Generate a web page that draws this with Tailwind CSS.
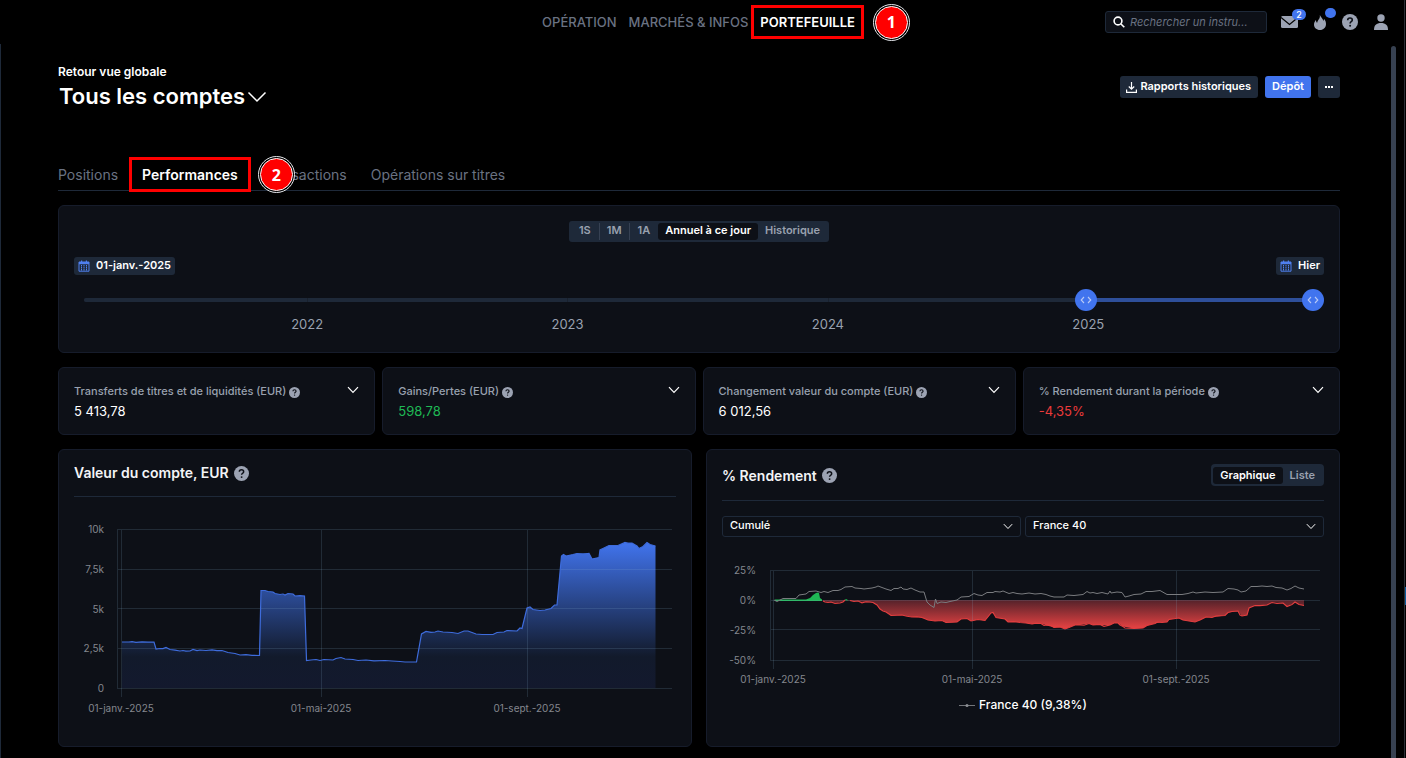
<!DOCTYPE html>
<html lang="fr">
<head>
    <meta charset="UTF-8">
    <meta name="viewport" content="width=device-width, initial-scale=1.0">
    <title>Portefeuille - Performances</title>
    <script src="https://cdn.jsdelivr.net/npm/@tailwindcss/browser@4"></script>
</head>
<body class="min-h-screen bg-black font-['Inter',sans-serif] text-white overflow-x-hidden">
    <!-- Shared icons -->
    <svg class="hidden">
        <symbol id="chevron" viewBox="0 0 12 8">
            <path d="M1 1.2 6 6.4 11 1.2" fill="none" stroke="currentColor" stroke-width="1.2"/>
        </symbol>
        <symbol id="help" viewBox="0 0 16 16">
            <circle cx="8" cy="8" r="8" fill="#9ca3b3"/>
            <path d="M5.7 6.2C5.7 4.8 6.7 4 8 4s2.3.8 2.3 2c0 1.7-2.2 1.7-2.2 3.4" fill="none" stroke="#0d1017" stroke-width="1.6"/>
            <circle cx="8.1" cy="11.8" r="1" fill="#0d1017"/>
        </symbol>
        <symbol id="calendar" viewBox="0 0 12 12">
            <path d="M1 2h10v9.2H1z" fill="none" stroke="#4f80f0" stroke-width="1"/>
            <path d="M1 2h10v2.2H1zM3 .4h1.2V2H3zM7.8.4H9V2H7.8z" fill="#4f80f0"/>
            <path d="M3.5 5v5.5M6 5v5.5M8.5 5v5.5" stroke="#4f80f0" stroke-width="1" stroke-dasharray="1.5 .5"/>
        </symbol>
    </svg>

    <!-- Header -->
    <header class="flex h-11 items-center">
        <div class="flex-1"></div>
        <nav class="relative flex items-center text-[13px] font-medium text-gray-500">
            <a href="#" class="mr-[12px] pt-px">OPÉRATION</a>
            <a href="#" class="mr-[3px] pt-px">MARCHÉS &amp; INFOS</a>
            <a href="#" class="flex h-[34px] items-center border-3 border-[#f00] px-[6px] pt-px font-semibold text-white">PORTEFEUILLE</a>
            <span class="absolute left-full ml-[9px] flex size-[37px] items-center justify-center rounded-full border border-gray-200 p-px">
                <span class="flex size-full items-center justify-center rounded-full border border-white bg-[#f00] font-['Open_Sans',sans-serif] text-base font-bold text-white">1</span>
            </span>
        </nav>
        <div class="flex flex-1 items-center justify-end">
            <label class="flex h-[22px] w-[162px] items-center rounded-[3px] border border-gray-800 bg-[#0d1017] pl-[7px]">
                <svg class="size-3 shrink-0" viewBox="0 0 12 12" fill="none" stroke="#fff" stroke-width="1.6"><circle cx="5" cy="5" r="3.9"/><path d="m8 8 3.3 3.3"/></svg>
                <input type="text" aria-label="Rechercher" placeholder="Rechercher un instru..." class="ml-[5px] w-full min-w-0 bg-transparent text-[11px] italic outline-none placeholder:text-gray-500">
            </label>
            <button aria-label="Messages" class="relative ml-[14px]">
                <svg class="h-3 w-[17px]" viewBox="0 0 17 12"><rect width="17" height="12" rx="1.5" fill="#9ca3b3"/><path d="M0 1.5 8.5 8.5 17 1.5" fill="none" stroke="#000" stroke-width="1.3"/></svg>
                <span class="absolute -top-[7px] left-[11px] flex h-[11px] w-[14px] items-center justify-center rounded-full bg-[#4174ee] text-[9px] font-medium">2</span>
            </button>
            <button aria-label="Nouveautés" class="relative ml-4">
                <svg class="h-[15px] w-3" viewBox="0 0 12 15"><path d="M5.8 0C6.8 2.5 9 3.4 9.2 5.8c.6-.4.8-1.2.7-2C11.5 5.5 12 7.3 12 9c0 3.5-2.6 6-6 6s-6-2.3-6-5.5C0 7.5 1 6 2 5c0 1.5.4 2.4 1.2 2.8C3.5 4.8 6.5 4 5.8 0z" fill="#9ca3b3"/></svg>
                <span class="absolute -top-[7px] left-[11px] h-[10px] w-[11px] rounded-full bg-[#4174ee]"></span>
            </button>
            <button aria-label="Aide" class="ml-4"><svg class="size-4"><use href="#help"/></svg></button>
            <button aria-label="Profil" class="ml-4 mr-[18px]">
                <svg class="h-4 w-[14px]" viewBox="0 0 14 16" fill="#9ca3b3"><circle cx="7" cy="4" r="3.7"/><path d="M0 16c0-5 2.5-7 7-7s7 2 7 7z"/></svg>
            </button>
        </div>
    </header>

    <main class="relative border-l border-gray-800 pl-[57px] pr-[66px] pb-[11px]">
        <!-- Scrollbar and edge of the neighbouring window -->
        <div class="absolute right-[10px] top-[2px] bottom-0 w-[5px] rounded-t-full bg-[#374151]"></div>
        <div class="absolute right-0 -top-11 bottom-0 w-[2px] border-l border-[#2b2f36]">
            <div class="mt-[587px] h-[18px] bg-[#0b5c9c]"></div>
        </div>

        <div class="flex items-start justify-between pt-[18px]">
            <div>
                <a href="#" class="block text-xs leading-[20px] font-semibold">Retour vue globale</a>
                <button class="mt-px flex items-center pl-px text-[22px] leading-[26px] font-semibold">
                    Tous les comptes
                    <svg class="ml-[2px] mt-[2px] h-[12px] w-[20px]" viewBox="0 0 20 12"><path d="m1.5 1.5 8.5 8.5 8.5-8.5" fill="none" stroke="#fff" stroke-width="1.5"/></svg>
                </button>
            </div>
            <div class="mt-[14px] flex gap-[7px] text-[11px] font-semibold">
                <button class="flex h-[22px] items-center rounded-[3px] bg-gray-800 pl-[6px] pr-[7px] pb-px">
                    <svg class="mr-[3px] mt-[2px] h-[11px] w-[11px]" viewBox="0 0 11 11" fill="none" stroke="#fff" stroke-width="1.2"><path d="M5.5 0v7M2.8 4.5l2.7 2.7 2.7-2.7M.6 7.5v2.9h9.800V7.5"/></svg>
                    Rapports historiques
                </button>
                <button class="h-[22px] rounded-[3px] bg-[#4174ee] px-[7px] pb-px">Dépôt</button>
                <button aria-label="Plus" class="flex size-[22px] items-center justify-center gap-px rounded-[3px] bg-gray-800">
                    <span class="size-[2px] bg-white"></span><span class="size-[2px] bg-white"></span><span class="size-[2px] bg-white"></span>
                </button>
            </div>
        </div>

        <!-- Tabs -->
        <nav class="mt-[56px] flex h-[26px] gap-[24px] border-b border-gray-800 text-sm text-gray-500">
            <a href="#">Positions</a>
            <a href="#" class="relative font-semibold text-white">
                Performances
                <span class="absolute -inset-x-[13px] -top-[8px] h-[35px] border-3 border-[#f00]"></span>
            </a>
            <a href="#" class="relative">
                Transactions
                <span class="absolute -left-[4px] -top-[9px] flex size-[37px] items-center justify-center rounded-full border border-gray-200 bg-black p-px">
                    <span class="flex size-full items-center justify-center rounded-full border border-white bg-[#f00] font-['Open_Sans',sans-serif] text-base font-bold text-white">2</span>
                </span>
            </a>
            <a href="#">Opérations sur titres</a>
        </nav>

        <!-- Period -->
        <section class="mt-[14px] rounded-md border border-[#161c2b] bg-[#0d1017] px-[15px] pt-[15px] pb-[19px]">
            <div class="mx-auto flex h-[21px] w-fit items-center rounded-[3px] bg-gray-800 p-[2px] text-[11px] font-semibold text-gray-400">
                <button class="h-[17px] border-r border-gray-700 px-[8px] pb-[3px] leading-[14px]">1S</button>
                <button class="h-[17px] border-r border-gray-700 px-[7px] pb-[3px] leading-[14px]">1M</button>
                <button class="h-[17px] px-[8px] pb-[3px] leading-[14px]">1A</button>
                <button class="h-[17px] rounded-[3px] bg-[#0d1017] px-[7px] pb-[3px] leading-[14px] text-white">Annuel à ce jour</button>
                <button class="h-[17px] px-[7px] pb-[3px] leading-[14px]">Historique</button>
            </div>
            <div class="mt-[15px] flex justify-between text-[11px] font-semibold">
                <button class="flex h-[18px] items-center rounded-[3px] bg-gray-800 px-[4px] pb-px">
                    <svg class="mr-[6px] size-3"><use href="#calendar"/></svg>01-janv.-2025
                </button>
                <button class="flex h-[18px] items-center rounded-[3px] bg-gray-800 px-[4px] pb-px">
                    <svg class="mr-[6px] size-3"><use href="#calendar"/></svg>Hier
                </button>
            </div>
            <div class="ml-[10px]">
                <div class="relative mt-[14px] flex h-[22px] items-center">
                    <div class="flex h-1 w-full gap-px overflow-hidden rounded-full bg-[#19212d]">
                        <span class="w-[18%] bg-gray-800"></span>
                        <span class="w-[20.9%] bg-gray-800"></span>
                        <span class="w-[20.9%] bg-gray-800"></span>
                        <span class="flex-1 bg-gray-800"></span>
                    </div>
                    <div class="absolute right-[11px] left-[81%] h-1 bg-[#2e4f9a]"></div>
                    <input type="range" aria-label="Début de période" min="0" max="1000" value="814" class="pointer-events-none absolute inset-0 m-0 w-full appearance-none bg-transparent [&::-webkit-slider-thumb]:pointer-events-auto [&::-webkit-slider-thumb]:size-[22px] [&::-webkit-slider-thumb]:appearance-none [&::-webkit-slider-thumb]:rounded-full [&::-webkit-slider-thumb]:bg-[#4174ee]">
                    <input type="range" aria-label="Fin de période" min="0" max="1000" value="1000" class="pointer-events-none absolute inset-0 m-0 w-full appearance-none bg-transparent [&::-webkit-slider-thumb]:pointer-events-auto [&::-webkit-slider-thumb]:size-[22px] [&::-webkit-slider-thumb]:appearance-none [&::-webkit-slider-thumb]:rounded-full [&::-webkit-slider-thumb]:bg-[#4174ee]">
                    <svg class="pointer-events-none absolute left-[80.8%] h-[22px] w-[22px] -translate-x-1/2" viewBox="0 0 22 22" fill="none" stroke="#b9caf6" stroke-width="1.1"><path d="M9 8 6.2 11 9 14M13 8l2.800 3-2.800 3"/></svg>
                    <svg class="pointer-events-none absolute right-0 h-[22px] w-[22px]" viewBox="0 0 22 22" fill="none" stroke="#b9caf6" stroke-width="1.1"><path d="M9 8 6.2 11 9 14M13 8l2.800 3-2.800 3"/></svg>
                </div>
                <div class="mt-1 flex pl-[7.5%] text-center text-[13px] leading-[18px] text-gray-400">
                    <span class="w-[22.7%]">2022</span>
                    <span class="w-[22.7%]">2023</span>
                    <span class="w-[22.7%]">2024</span>
                    <span class="w-[22.7%]">2025</span>
                </div>
            </div>
        </section>

        <!-- Key figures -->
        <section class="mt-[14px] grid grid-cols-[317fr_313fr_313fr_317fr] gap-[7px] text-[11px] font-medium text-gray-400">
            <div class="flex h-[68px] justify-between rounded-md border border-[#161c2b] bg-[#0d1017] px-[15px] pt-[14px]">
                <div>
                    <h3 class="flex items-center leading-[18px]">Transferts de titres et de liquidités (EUR)<svg class="ml-[3px] mt-[2px] size-[11px]"><use href="#help"/></svg></h3>
                    <p class="mt-px text-[13px] leading-[20px] font-normal text-white">5 413,78</p>
                </div>
                <button aria-label="Détails" class="mt-[4px] h-2 text-white"><svg class="h-2 w-3"><use href="#chevron"/></svg></button>
            </div>
            <div class="flex h-[68px] justify-between rounded-md border border-[#161c2b] bg-[#0d1017] px-[15px] pt-[14px]">
                <div>
                    <h3 class="flex items-center leading-[18px]">Gains/Pertes (EUR)<svg class="ml-[3px] mt-[2px] size-[11px]"><use href="#help"/></svg></h3>
                    <p class="mt-px text-[13px] leading-[20px] font-normal text-[#1fb955]">598,78</p>
                </div>
                <button aria-label="Détails" class="mt-[4px] h-2 text-white"><svg class="h-2 w-3"><use href="#chevron"/></svg></button>
            </div>
            <div class="flex h-[68px] justify-between rounded-md border border-[#161c2b] bg-[#0d1017] px-[15px] pt-[14px]">
                <div>
                    <h3 class="flex items-center leading-[18px]">Changement valeur du compte (EUR)<svg class="ml-[3px] mt-[2px] size-[11px]"><use href="#help"/></svg></h3>
                    <p class="mt-px text-[13px] leading-[20px] font-normal text-white">6 012,56</p>
                </div>
                <button aria-label="Détails" class="mt-[4px] h-2 text-white"><svg class="h-2 w-3"><use href="#chevron"/></svg></button>
            </div>
            <div class="flex h-[68px] justify-between rounded-md border border-[#161c2b] bg-[#0d1017] px-[15px] pt-[14px]">
                <div>
                    <h3 class="flex items-center leading-[18px]">% Rendement durant la période<svg class="ml-[3px] mt-[2px] size-[11px]"><use href="#help"/></svg></h3>
                    <p class="mt-px text-[13px] leading-[20px] font-normal text-[#ea3a3a]">-4,35%</p>
                </div>
                <button aria-label="Détails" class="mt-[4px] h-2 text-white"><svg class="h-2 w-3"><use href="#chevron"/></svg></button>
            </div>
        </section>

        <!-- Charts -->
        <div class="mt-[14px] grid grid-cols-2 gap-[14px]">
            <section class="rounded-md border border-[#161c2b] bg-[#0d1017] px-[15px] pt-[14px]">
                <div class="flex h-[33px] items-start border-b border-gray-800">
                    <h2 class="flex items-center text-sm leading-[18px] font-semibold text-gray-100">Valeur du compte, EUR<svg class="ml-[5px] size-[15px]"><use href="#help"/></svg></h2>
                </div>
                <svg class="block w-full" viewBox="74 497 602 225">
                    <defs>
                        <linearGradient id="value" gradientUnits="userSpaceOnUse" x1="0" y1="542" x2="0" y2="689">
                            <stop offset="0" stop-color="#4174ee"/>
                            <stop offset=".78" stop-color="#121a2b"/>
                            <stop offset="1" stop-color="#13192e"/>
                        </linearGradient>
                    </defs>
                    <path fill="url(#value)" d="M122 688V642H154L156 649 160 648.5 166 647.5 170 649.5 180 651H190L193 649.5 200 650 222 650.5 228 652.5 235 653.5 240 655 259.5 655.5 261 590.5H265L268 591.5 273 592 275 593.5 280 594.5 285 595 288 593.5 293 594 295 596H304.5L306.5 660.5 311 660 316 659.5 320 660.5 324 659.5 333 660 336 658.5 341 657.5 345 659 353 659.5 358 660.5H385L400 661.5 405 662H416.5L421.5 634 426 631.5 435 632 438 631 443 632 452 632.5 458 633.5 464 631H468L472 632.5 476 634 482 634.5H493L497 632.5 504 632 507 630.5 517 631 520 628 522 628.5 527 608 530 607 533 609.5 540 610.5 545 610 551 608.5 554.5 605H557L561.5 556 563.5 554.5 566 556 573 554.5 577 553.5H589L592 559 599 557.5 600 550 604 548 609 545.5H618L625 542.5 632 543 637 546 639 548.5 643 546.5 647 542.5 650 544.5 655.5 546V688Z"/>
                    <g stroke="#8fb8d8" stroke-opacity=".16" shape-rendering="crispEdges">
                        <path d="M118 529.5H672M118 569.5H672M118 608.5H672M118 648.5H672M118 688.5H672"/>
                        <path d="M117.5 529V689M121.5 530V697M321.5 530V697M527.5 530V697"/>
                    </g>
                    <path fill="none" stroke="#3e6cdc" stroke-width="1.2" d="M122 642H129L132 641.6 136 642.3 142 641.8 148 642.2 154 642 156 649 160 648.5 163 648.6 166 647.5 170 649.5 175 650.2 180 651 183 650.5 186 651.2 190 651 193 649.5 197 650.6 200 650 206 650.5 212 649.9 217 650.7 222 650.5 228 652.5 235 653.5 240 655 246 654.6 252 655.3 259.5 655.5 261 590.5H265L268 591.5 273 592 275 593.5 280 594.5 283 594 285 595 288 593.5 293 594 295 596 300 595.6 304.5 596 306.5 660.5 311 660 316 659.5 320 660.5 324 659.5 333 660 336 658.5 341 657.5 345 659 353 659.5 358 660.5 366 660 374 660.8 385 660.5 392 661 400 661.5 405 662H416.5L421.5 634 426 631.5 431 632.3 435 632 438 631 443 632 452 632.5 458 633.5 464 631H468L472 632.5 476 634 482 634.5H493L497 632.5 504 632 507 630.5 517 631 520 628 522 628.5 527 608 530 607 533 609.5 540 610.5 545 610 551 608.5 554.5 605H557L561.5 556 563.5 554.5 566 556 573 554.5 577 553.5 583 554 589 553.5 592 559 599 557.5 600 550 604 548 609 545.5H618L625 542.5 628 543.3 632 543 637 546 639 548.5 643 546.5 647 542.5 650 544.5 655.5 546"/>
                    <g fill="#84878e" font-size="10" text-anchor="end">
                        <text x="104" y="533">10k</text>
                        <text x="104" y="573">7,5k</text>
                        <text x="104" y="613">5k</text>
                        <text x="104" y="652">2,5k</text>
                        <text x="104" y="692">0</text>
                    </g>
                    <g fill="#84878e" font-size="10" text-anchor="middle">
                        <text x="121" y="712">01-janv.-2025</text>
                        <text x="321" y="712">01-mai-2025</text>
                        <text x="527" y="712">01-sept.-2025</text>
                    </g>
                </svg>
            </section>

            <section class="rounded-md border border-[#161c2b] bg-[#0d1017] px-[15px] pt-[14px] pb-[31px]">
                <div class="flex h-[37px] items-start justify-between border-b border-gray-800">
                    <h2 class="flex items-center text-sm leading-[23px] font-semibold text-gray-100">% Rendement<svg class="ml-[5px] size-[15px]"><use href="#help"/></svg></h2>
                    <div class="flex h-[22px] items-center rounded-[4px] bg-gray-800 p-[2px] text-[11px] font-semibold text-gray-400">
                        <button class="h-[17px] rounded-[3px] bg-[#0d1017] px-[7px] pb-px leading-[16px] text-white">Graphique</button>
                        <button class="h-[17px] px-[7px] pb-px leading-[16px]">Liste</button>
                    </div>
                </div>
                <div class="mt-[15px] flex gap-[4px]">
                    <div class="relative flex-1">
                        <select aria-label="Mode de calcul" class="block h-[21px] w-full appearance-none rounded-[3px] border border-gray-800 bg-transparent px-[7px] pb-[2px] text-[11px] font-medium">
                            <option>Cumulé</option>
                        </select>
                        <svg class="pointer-events-none absolute right-[8px] top-[7px] h-[7px] w-[10px]"><use href="#chevron"/></svg>
                    </div>
                    <div class="relative flex-1">
                        <select aria-label="Indice de comparaison" class="block h-[21px] w-full appearance-none rounded-[3px] border border-gray-800 bg-transparent px-[7px] pb-[2px] text-[11px] font-medium">
                            <option>France 40</option>
                        </select>
                        <svg class="pointer-events-none absolute right-[8px] top-[7px] h-[7px] w-[10px]"><use href="#chevron"/></svg>
                    </div>
                </div>
                <svg class="block w-full" viewBox="722 537 602 158">
                    <defs>
                        <linearGradient id="loss" gradientUnits="userSpaceOnUse" x1="0" y1="600" x2="0" y2="630">
                            <stop offset="0" stop-color="#54222a"/>
                            <stop offset="1" stop-color="#ef4444"/>
                        </linearGradient>
                    </defs>
                    <path fill="#1fb955" d="M775 601V599.5H806L810 598 813 595 816 593 818 592.5 819 593 820 598 822 599.5V601ZM844 600.5 846 599 849 600.5Z"/>
                    <path fill="url(#loss)" d="M823 600V601L828 602.5 838 603 843 602 846 600 851 601H858L866 602.5 873 602.5 877 605 880 609 886 612 891 615.5 902 615 912 617 922 617.5 928 620 935 621 942 620.5 946 622.5 957 622 961 619 967 618.5 971 621 978 619.5 985 620.5 991 613 993 612.5 996 617.5 1005 619 1008 622H1020L1032 624 1041 623.5 1047 625.5 1054 627.5 1060 627 1065 629 1069 627.5 1075 625H1080L1089 623.5 1093 625H1110L1114 623H1118L1123 626.5 1134 628.5 1143 628 1147 625.5 1155 623.5 1162 622H1167L1169 619.5 1179 618 1183 620 1195 622 1200 620 1206 617H1215L1225 615.5 1228 612.5 1238 611 1242 616 1247 615 1249 608 1255 605.5 1267 605 1272 602.5 1283 603 1287 606.5 1295 602 1299 604.5 1304 605.5V600Z"/>
                    <g stroke="#8fb8d8" stroke-opacity=".16" shape-rendering="crispEdges">
                        <path d="M771 570.5H1320M771 600.5H1320M771 629.5H1320M771 660.5H1320"/>
                        <path d="M770.5 570V661M773.5 571V669M972.5 571V669M1176.5 571V669"/>
                    </g>
                    <path fill="none" stroke="#e23e3f" stroke-width="1.1" d="M823 601 825 602 828 602.5 831 602 835 603.5 840 603 843 602 845 600M850 600.5 854 601.5 858 601 862 602.8 866 601.8 870 602 873 602.5 877 605 880 609 883 611 886 612 889 614 891 615.5 897 615.2 902 615 907 616.3 912 617 917 616.8 922 617.5 928 620 935 621 942 620.5 946 622.5 952 622.2 957 622 961 619 967 618.5 971 621 978 619.5 985 620.5 991 613 993 612.5 996 617.5 1005 619 1008 622 1014 621.6 1020 622.5 1026 623 1032 624 1036 623.3 1041 623.5 1044 625.5 1047 625 1051 625.5 1054 627.5 1060 627 1065 629 1069 627.5 1075 625H1080L1084 625.3 1089 623.5 1093 625 1100 624.5 1104 626.3 1110 625 1114 623H1118L1120 625 1123 626.5 1125 628 1134 628.5 1143 628 1147 625.5 1155 623.5 1157 622 1162 622.5 1167 622 1169 619.5 1179 618 1183 620 1189 621 1195 622 1200 620 1206 617 1212 617.5 1216 616 1225 615.5 1228 612.5 1232 611.5 1238 611 1240 615 1242 616 1247 615 1249 608 1255 605.5 1260 605.6 1267 605 1272 602.5 1277 603.5 1283 603 1287 606.5 1292 604.5 1295 602 1299 604.5 1304 605.5"/>
                    <path fill="none" stroke="#7a7c80" d="M774 600 777 601.5 780 600 783 598.5 790 598.5 796 598.5 799 595 806 594 809 591.5 816 591 821 592.5 824 591.5 828 592.5 833 590.5 838 590.5 841 589.5 845 587 852 586.5 855 588 861 588.5 864 589 868 588.5 872 588 876 587 878 586 882 587.5 886 589 891 590.5 894 588.5 898 588.5 901 587 903 589 907 589.5 911 588 915 590 920 592 924 592 927 602 930 605 934 607.5 935.5 599 937 603.5 941 602 946 602.5 950 601.5 957 600 961 597 969 596.5 974 593.5 978 595 982 595.5 987 592.5 993 592.5 995 591.5 1000 592 1003 591 1009 593.5 1013 592.5 1017 593.5 1022 594 1029 593 1035 594 1041 593.5 1046 594.5 1050 596 1054 597 1064 597 1067 595 1074 595.5 1083 594.5 1087 591.5 1090 593 1093 592.5 1097 593.5 1102 592.5 1108 594 1110 591 1111 593 1117 592 1122 592.5 1125 597 1129 596 1134 594.5 1141 594 1146 591.5 1152 591.5 1160 590.5 1167 594.5 1175 594.5 1182 594.5 1188 593.5 1193 592 1196 593 1205 592 1213 592.5 1223 592 1228 588.5 1234 589 1238 590 1241 592 1246 591 1251 586.5 1257 586.5 1262 586 1267 586.5 1272 586 1276 587.5 1282 588 1287 590 1291 588.5 1295 586 1299 588 1304 589"/>
                    <g fill="#84878e" font-size="10" text-anchor="end">
                        <text x="756" y="574">25%</text>
                        <text x="756" y="604">0%</text>
                        <text x="756" y="634">-25%</text>
                        <text x="756" y="664">-50%</text>
                    </g>
                    <g fill="#84878e" font-size="10" text-anchor="middle">
                        <text x="773" y="683">01-janv.-2025</text>
                        <text x="972" y="683">01-mai-2025</text>
                        <text x="1176" y="683">01-sept.-2025</text>
                    </g>
                </svg>
                <p class="flex items-center justify-center text-xs leading-[20px] font-medium">
                    <svg class="mr-[4px] mt-px h-[7px] w-[16px]" viewBox="0 0 16 7"><path d="M0 3.5h16" stroke="#73767b"/><circle cx="8" cy="3.5" r="1.5" fill="#8b8e93"/></svg>
                    France 40 (9,38%)
                </p>
            </section>
        </div>
    </main>
</body>
</html>
